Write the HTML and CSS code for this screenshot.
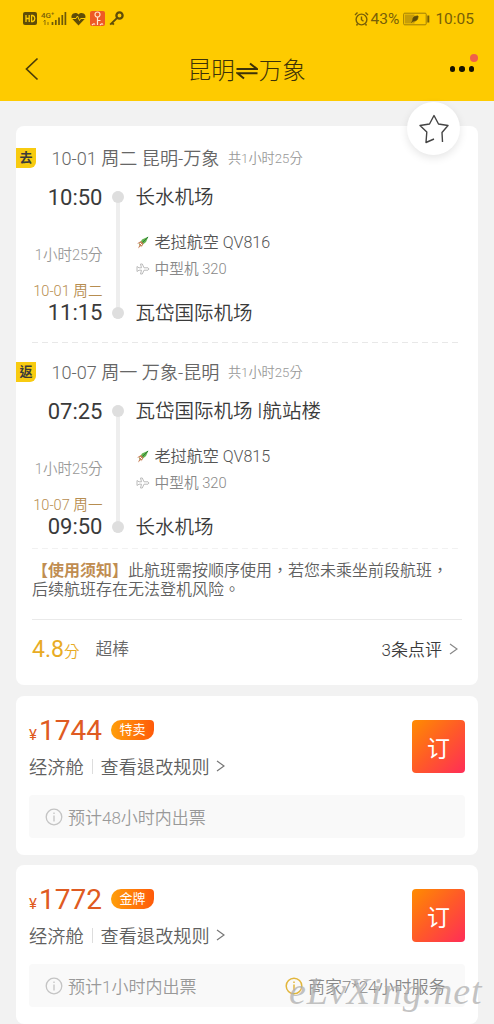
FILE: index.html
```html
<!DOCTYPE html>
<html lang="zh-TW">
<head>
<meta charset="utf-8">
<title>昆明⇌万象</title>
<link rel="stylesheet" href="styles.css">
</head>
<body>
<header class="top">
  <div class="status">
    <svg class="status-icons" width="106" height="20" viewBox="0 0 106 20">
      <rect x="0" y="3" width="14" height="13" rx="2" fill="#5f4d08"/>
      <path d="M3 6v7M6.200 6v7M3 9.500h3.200M8.600 6.500v6h1.200q2-.5 2-3t-2-3z" fill="none" stroke="#fc0" stroke-width="1.300"/>
      <text class="net" x="18" y="8.500">4G⁺</text>
      <path d="M22 11v5M20.500 12.500l1.500-1.500M25 13v3" fill="none" stroke="#8a6f08"/>
      <path d="M29.500 13v3M32.800 11v5M36 8.500V16M39.300 6v10M42.400 3v13" stroke="#6d5808" stroke-width="1.700"/>
      <path d="M55.500 16.500l-6.200-6.500c-3-4 2.700-8.300 6.200-4.500 3.500-3.800 9.200.5 6.200 4.500z" fill="#5f4d08"/>
      <path d="M49 9.500h4l1.500-2.500 2 4.500 1.200-2H62" fill="none" stroke="#fc0"/>
      <rect x="67" y="2" width="15" height="15" rx="2" fill="#ee5a24"/>
      <path d="M74.500 8v8M74.500 11.500h3M69 16q2-2 3-.5M77 16q2-2 3-.5" fill="none" stroke="#ffe9d0" stroke-width="1.200"/>
      <circle cx="74.500" cy="5.500" r="2.500" fill="none" stroke="#ffe0c4" stroke-width="1.200"/>
      <circle cx="96.500" cy="6.500" r="3.100" fill="none" stroke="#5f4d08" stroke-width="2.300"/>
      <path d="M94.200 8.900l-7 6.700M89 13.800l1.800 1.800" fill="none" stroke="#5f4d08" stroke-width="2"/>
    </svg>
    <div class="status-right">
      <svg width="15" height="16" viewBox="0 0 15 16" fill="none" stroke="#785f08" stroke-width="1.400">
        <circle cx="7.500" cy="8.500" r="5.400"/><path d="M7.500 5.500v3.200l2 1.500M1 4l2.500-2.500M14 4l-2.500-2.500M3.500 13l-1 1.500M11.500 13l1 1.500"/>
      </svg>
      <span class="pct">43%</span>
      <svg class="battery" width="27" height="14" viewBox="0 0 27 14">
        <rect x=".7" y="1.200" width="22.500" height="11.600" rx="1" fill="none" stroke="#9d7d08"/>
        <rect x="2" y="2.500" width="9.500" height="9" fill="#c79d08"/>
        <path d="M15 4q-6 0-5 5q5 .5 5-5zM8.500 10.500l2-2.500" fill="#5f4d08" stroke="#5f4d08"/>
        <rect x="24.300" y="3.500" width="2" height="7" fill="#785f08"/>
      </svg>
      <span>10:05</span>
    </div>
  </div>
  <div class="nav">
    <svg class="back" width="14" height="24" viewBox="0 0 14 24"><path d="M12.500 1.500L1.500 12l11 10.500" fill="none" stroke="#4b3d08" stroke-width="1.700"/></svg>
    <h1 class="title"><span>昆明</span><svg width="22" height="18" viewBox="0 0 22 18" fill="none" stroke="#3d3208" stroke-width="2"><path d="M.5 7H21L14 1.500M21.500 11.200H1.500L8 16.500"/></svg><span>万象</span></h1>
    <div class="more"><i></i><i></i><i></i><b class="badge"></b></div>
  </div>
</header>

<main class="list">
  <section class="card trip">
    <button class="fav"><svg width="32" height="30" viewBox="0 0 32 30"><path d="M16 25L8 28.500L8.800 18L2 11.500L11.500 10L16 1.500L20.500 10L30 11.500L24 18.500L24.500 28" fill="none" stroke="#444" stroke-width="1.400" stroke-linejoin="round"/></svg></button>

    <article class="leg">
      <div class="leg-head"><span class="flag">去</span><span class="leg-date">10-01 周二 昆明-万象</span><span class="total">共1小时25分</span></div>
      <div class="leg-body">
        <div class="times"><span class="time">10:50</span><span class="dur">1小时25分</span><span class="day">10-01 周二</span><span class="time">11:15</span></div>
        <div class="track"><i></i><i></i></div>
        <div class="places">
          <span class="place">长水机场</span>
          <span class="airline"><svg width="13" height="14" viewBox="0 0 13 14"><path d="M12.500.5L6 3.500L3 8.500L5 10L10 6z" fill="#62b34b"/><path d="M12 1L5 8" stroke="#2e7d3c"/><path d="M5 5L1 7.500h3l-2 5l3.500-3v2l2-4z" fill="#c9825b"/><path d="M4 7l2 2" stroke="#fff"/></svg>老挝航空 QV816</span>
          <span class="plane"><svg width="14" height="12" viewBox="0 0 14 12"><path d="M1 3.500L3 4.800h2.500L4.500 1H6.300L8 4.800h4q2 1.200 0 2.400H8L6.300 11H4.500l1-3.800H3L1 8.500z" fill="none" stroke="#bbb"/></svg>中型机 320</span>
          <span class="place end">瓦岱国际机场</span>
        </div>
      </div>
    </article>

    <article class="leg second">
      <div class="leg-head"><span class="flag">返</span><span class="leg-date">10-07 周一 万象-昆明</span><span class="total">共1小时25分</span></div>
      <div class="leg-body">
        <div class="times"><span class="time">07:25</span><span class="dur">1小时25分</span><span class="day">10-07 周一</span><span class="time">09:50</span></div>
        <div class="track"><i></i><i></i></div>
        <div class="places">
          <span class="place">瓦岱国际机场 I航站楼</span>
          <span class="airline"><svg width="13" height="14" viewBox="0 0 13 14"><path d="M12.500.5L6 3.500L3 8.500L5 10L10 6z" fill="#62b34b"/><path d="M12 1L5 8" stroke="#2e7d3c"/><path d="M5 5L1 7.500h3l-2 5l3.500-3v2l2-4z" fill="#c9825b"/><path d="M4 7l2 2" stroke="#fff"/></svg>老挝航空 QV815</span>
          <span class="plane"><svg width="14" height="12" viewBox="0 0 14 12"><path d="M1 3.500L3 4.800h2.500L4.500 1H6.300L8 4.800h4q2 1.200 0 2.400H8L6.300 11H4.500l1-3.800H3L1 8.500z" fill="none" stroke="#bbb"/></svg>中型机 320</span>
          <span class="place end">长水机场</span>
        </div>
      </div>
    </article>

    <p class="notice"><strong>【使用须知】</strong>此航班需按顺序使用，若您未乘坐前段航班，<br>后续航班存在无法登机风险。</p>
    <div class="rating">
      <span class="score">4.8<small>分</small></span><span class="verdict">超棒</span>
      <span class="reviews">3条点评</span><svg width="9" height="12" viewBox="0 0 9 12"><path d="M1 1l7 5-7 5" fill="none" stroke="#888" stroke-width="1.200"/></svg>
    </div>
  </section>

  <section class="card fare">
    <div class="fare-top">
      <div class="fare-info">
        <div class="price"><small>¥</small><span>1744</span><em>特卖</em></div>
        <div class="rules"><span>经济舱</span><i></i><span>查看退改规则</span><svg width="9" height="12" viewBox="0 0 9 12"><path d="M1 1l7 5-7 5" fill="none" stroke="#777" stroke-width="1.200"/></svg></div>
      </div>
      <button class="book">订</button>
    </div>
    <div class="tips">
      <span class="tip"><svg width="18" height="18" viewBox="0 0 18 18" fill="none" stroke="#c4c4c4" stroke-width="1.300"><circle cx="9" cy="9" r="7.800"/><path d="M9 7.500v6M9 4.500v1.500"/></svg>预计48小时内出票</span>
    </div>
  </section>

  <section class="card fare">
    <div class="fare-top">
      <div class="fare-info">
        <div class="price"><small>¥</small><span>1772</span><em>金牌</em></div>
        <div class="rules"><span>经济舱</span><i></i><span>查看退改规则</span><svg width="9" height="12" viewBox="0 0 9 12"><path d="M1 1l7 5-7 5" fill="none" stroke="#777" stroke-width="1.200"/></svg></div>
      </div>
      <button class="book">订</button>
    </div>
    <div class="tips">
      <span class="tip"><svg width="18" height="18" viewBox="0 0 18 18" fill="none" stroke="#c4c4c4" stroke-width="1.300"><circle cx="9" cy="9" r="7.800"/><path d="M9 7.500v6M9 4.500v1.500"/></svg>预计1小时内出票</span>
      <span class="tip service"><svg width="18" height="18" viewBox="0 0 18 18" fill="none" stroke="#e2b63c" stroke-width="1.500"><circle cx="9" cy="9" r="7.800"/><path d="M9 7.500v6M9 4.500v1.500"/></svg>商家7*24小时服务</span>
    </div>
    <span class="watermark">eLvXing.net</span>
  </section>
</main>
</body>
</html>
```
FILE: styles.css
```css
* { box-sizing: border-box; }
body {
  margin: 0;
  width: 494px;
  height: 1024px;
  overflow: hidden;
  background: #f2f2f2;
  font-family: Roboto, "Noto Sans CJK TC", "Noto Sans CJK SC", sans-serif;
  font-weight: 350;
  color: #3a3a3a;
}
button { border: 0; padding: 0; font: inherit; }
svg { display: block; flex: none; }

/* Header */
.top { height: 101px; background: #fecb00; }
.status { display: flex; justify-content: space-between; height: 37px; padding: 9px 20px 0 23px; }
.net { font: 500 8px Roboto, sans-serif; fill: #785f08; }
.status-right { display: flex; align-items: center; height: 20px; font-size: 15.500px; font-weight: 400; color: #785f08; }
.pct { margin: 0 4px 0 2px; }
.battery { margin-right: 5px; }
.nav { display: flex; align-items: center; justify-content: space-between; height: 64px; padding: 0 20px 0 25px; }
.title { display: flex; align-items: center; margin: 3px 0 0 5px; font-size: 23.500px; font-weight: 300; line-height: 30px; color: #3d3208; }
.title svg { margin: 0 1px; }
.more { position: relative; display: flex; gap: 4px; }
.more i { width: 5.500px; height: 5.500px; border-radius: 50%; background: #161200; }
.badge { position: absolute; right: -4px; top: -12px; width: 8px; height: 8px; border-radius: 50%; background: #f0604a; }

/* Cards */
.list { display: flex; flex-direction: column; gap: 11px; padding: 25px 16px 0; }
.card { position: relative; flex: none; background: #fff; border-radius: 8px; }
.trip { height: 559px; padding-top: 17px; }
.fav {
  position: absolute; left: 391px; top: -24px; width: 53px; height: 53px;
  display: flex; align-items: center; justify-content: center;
  border-radius: 50%; background: #fff; box-shadow: 0 3px 8px rgba(0, 0, 0, .1);
}

/* Flight legs */
.leg { position: relative; height: 214px; }
.leg::after {
  content: ""; display: block; height: 1px; margin: 16px 16px 0;
  background: repeating-linear-gradient(90deg, #e8e8e8 0 6px, transparent 6px 10px);
}
.second { height: 206.500px; }
.second::after { margin-top: 8px; opacity: .6; }
.leg-head { display: flex; align-items: center; height: 30px; }
.flag {
  width: 20px; height: 20px; border-radius: 0 0 6px 0; background: #f8cb10;
  font-size: 13px; font-weight: 700; line-height: 20px; text-align: center;
}
.leg-date { margin: -2px 0 0 15.500px; font-size: 18.100px; color: #666; }
.total { margin: -2px 0 0 8.500px; font-size: 13.200px; color: #999; }
.leg-body { display: flex; height: 142px; margin-top: 11px; }
.times { display: flex; flex-direction: column; align-items: flex-end; width: 86.500px; padding-top: 1px; }
.time { font-size: 22px; line-height: 26px; font-weight: 400; }
.dur { margin-top: 36px; font-size: 14.500px; line-height: 18px; color: #999; }
.day { margin-top: 17px; font-size: 14.600px; line-height: 18px; color: #b78d50; }
.track {
  display: flex; flex-direction: column; justify-content: space-between;
  width: 12px; margin: 7px 0 7px 9px;
  background: linear-gradient(#eee, #eee) center / 4px 100% no-repeat;
}
.track i { width: 12px; height: 12px; border-radius: 50%; background: #dedede; }
.places { display: flex; flex-direction: column; margin-left: 12px; padding-top: 1px; white-space: nowrap; }
.place { font-size: 19.500px; line-height: 26px; }
.airline, .plane { display: flex; align-items: center; line-height: 20px; }
.airline { gap: 6px; margin-top: 22px; font-size: 16.100px; color: #555; }
.plane { gap: 5px; margin-top: 6px; font-size: 14.700px; color: #888; }
.end { margin-top: 22px; }

/* Notice and rating */
.notice { height: 58px; margin: -3px 16px 0; font-size: 16px; line-height: 19px; color: #5f5f5f; white-space: nowrap; }
.notice strong { font-weight: 700; color: #c08d52; }
.rating { display: flex; align-items: center; height: 60px; margin: 0 16px; border-top: 1px solid #eaeaea; }
.score { font-size: 23px; font-weight: 400; color: #e8ab24; }
.score small { font-size: 15.500px; font-weight: 350; }
.verdict { margin: -2px 0 0 16px; font-size: 16.800px; color: #666; }
.reviews { margin: -2px 7px 0 auto; font-size: 17px; }
.rating svg { margin-right: 4px; }

/* Fares */
.fare { height: 159px; padding: 19px 13px 0; }
.fare + .fare { margin-top: -1px; }
.fare-top { display: flex; justify-content: space-between; height: 80px; }
.price { display: flex; align-items: baseline; height: 30px; line-height: 32px; font-size: 28px; font-weight: 400; color: #df5b22; }
.price small { width: 10px; font-size: 15px; }
.price em {
  align-self: center; width: 43px; height: 20px; margin-left: 9px;
  border-radius: 10px 4px 10px 10px; background: linear-gradient(90deg, #ff9f0a, #ff5a0a);
  color: #fff; font-size: 13px; font-style: normal; line-height: 20px; text-align: center;
}
.rules { display: flex; align-items: center; margin-top: 7px; height: 28px; font-size: 18.200px; color: #5f5f5f; }
.rules i { width: 1px; height: 15px; margin: 0 8px; background: #ddd; }
.rules svg { margin-left: 6px; }
.book {
  width: 53px; height: 53px; margin-top: 5px; border-radius: 4px;
  background: linear-gradient(135deg, #ff8c00, #ff5a28 50%, #ff2d58);
  color: #fff; font-size: 23px; font-weight: 400;
}
.tips { display: flex; align-items: center; height: 43px; padding: 0 16px; border-radius: 4px; background: #f9f9f9; font-size: 17px; color: #999; }
.tip { display: flex; align-items: center; gap: 5px; width: 240px; white-space: nowrap; }
.service { width: auto; color: #888; }
.watermark {
  position: absolute; left: 273px; top: 103px;
  font: italic 400 38px/46px "Liberation Serif", serif;
  letter-spacing: 1px;
  color: rgba(175, 175, 175, .75); white-space: nowrap;
}
```
